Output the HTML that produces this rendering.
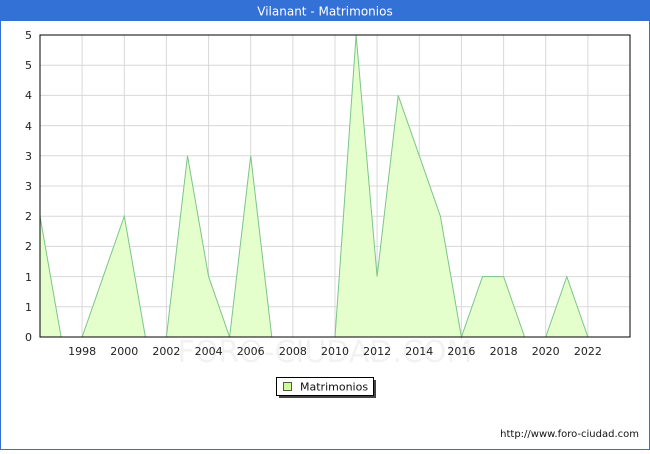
<!DOCTYPE html><html><head><style>
body{margin:0;width:650px;height:450px;overflow:hidden;background:#fff;font-family:"DejaVu Sans","Liberation Sans",sans-serif}
</style></head><body>
<svg width="650" height="450" xmlns="http://www.w3.org/2000/svg" font-family="DejaVu Sans, Liberation Sans, sans-serif">
<rect x="0" y="0" width="650" height="450" fill="#fff"/>
<rect x="0.5" y="0.5" width="649" height="449" fill="none" stroke="#3371d6"/>
<rect x="0" y="0" width="650" height="21" fill="#3371d6"/>
<text x="325" y="15.5" fill="#fff" font-size="12" text-anchor="middle">Vilanant - Matrimonios</text>
<g stroke="#d8d8d8" stroke-width="1">
<line x1="40" y1="65.2" x2="630" y2="65.2"/><line x1="40" y1="95.4" x2="630" y2="95.4"/><line x1="40" y1="125.6" x2="630" y2="125.6"/><line x1="40" y1="155.8" x2="630" y2="155.8"/><line x1="40" y1="186" x2="630" y2="186"/><line x1="40" y1="216.2" x2="630" y2="216.2"/><line x1="40" y1="246.4" x2="630" y2="246.4"/><line x1="40" y1="276.6" x2="630" y2="276.6"/><line x1="40" y1="306.8" x2="630" y2="306.8"/>
<line x1="82.1" y1="35" x2="82.1" y2="337"/><line x1="124.3" y1="35" x2="124.3" y2="337"/><line x1="166.4" y1="35" x2="166.4" y2="337"/><line x1="208.6" y1="35" x2="208.6" y2="337"/><line x1="250.7" y1="35" x2="250.7" y2="337"/><line x1="292.9" y1="35" x2="292.9" y2="337"/><line x1="335" y1="35" x2="335" y2="337"/><line x1="377.1" y1="35" x2="377.1" y2="337"/><line x1="419.3" y1="35" x2="419.3" y2="337"/><line x1="461.4" y1="35" x2="461.4" y2="337"/><line x1="503.6" y1="35" x2="503.6" y2="337"/><line x1="545.7" y1="35" x2="545.7" y2="337"/><line x1="587.9" y1="35" x2="587.9" y2="337"/>
</g>
<polygon fill="#e4ffcc" stroke="#7cc48c" stroke-width="1" points="40,337 40,216.2 61.1,337 82.1,337 103.2,276.6 124.3,216.2 145.4,337 166.4,337 187.5,155.8 208.6,276.6 229.6,337 250.7,155.8 271.8,337 292.9,337 313.9,337 335,337 356.1,35 377.1,276.6 398.2,95.4 419.3,155.8 440.4,216.2 461.4,337 482.5,276.6 503.6,276.6 524.6,337 545.7,337 566.8,276.6 587.9,337"/>
<rect x="40" y="35" width="590" height="302" fill="none" stroke="#000" stroke-width="1"/>
<g font-size="11" fill="#222" text-anchor="end">
<text x="32" y="39">5</text><text x="32" y="69">5</text><text x="32" y="99">4</text><text x="32" y="130">4</text><text x="32" y="160">3</text><text x="32" y="190">3</text><text x="32" y="220">2</text><text x="32" y="250">2</text><text x="32" y="281">1</text><text x="32" y="311">1</text><text x="32" y="341">0</text>
</g>
<g font-size="11" fill="#222" text-anchor="middle">
<text x="82.1" y="355">1998</text><text x="124.3" y="355">2000</text><text x="166.4" y="355">2002</text><text x="208.6" y="355">2004</text><text x="250.7" y="355">2006</text><text x="292.9" y="355">2008</text><text x="335" y="355">2010</text><text x="377.1" y="355">2012</text><text x="419.3" y="355">2014</text><text x="461.4" y="355">2016</text><text x="503.6" y="355">2018</text><text x="545.7" y="355">2020</text><text x="587.9" y="355">2022</text>
</g>
<text x="325" y="362" font-size="30" fill="#000" fill-opacity="0.05" text-anchor="middle">FORO-CIUDAD.COM</text>
<rect x="279" y="380" width="97" height="18" fill="#444"/>
<rect x="276.5" y="377.5" width="97" height="18" fill="#fff" stroke="#000"/>
<rect x="283.5" y="382.5" width="8" height="8" fill="#ccff99" stroke="#555"/>
<text x="300" y="390.5" font-size="11" fill="#111">Matrimonios</text>
<text x="639" y="437" font-size="10" fill="#111" text-anchor="end">http://www.foro-ciudad.com</text>
</svg>
</body></html>
